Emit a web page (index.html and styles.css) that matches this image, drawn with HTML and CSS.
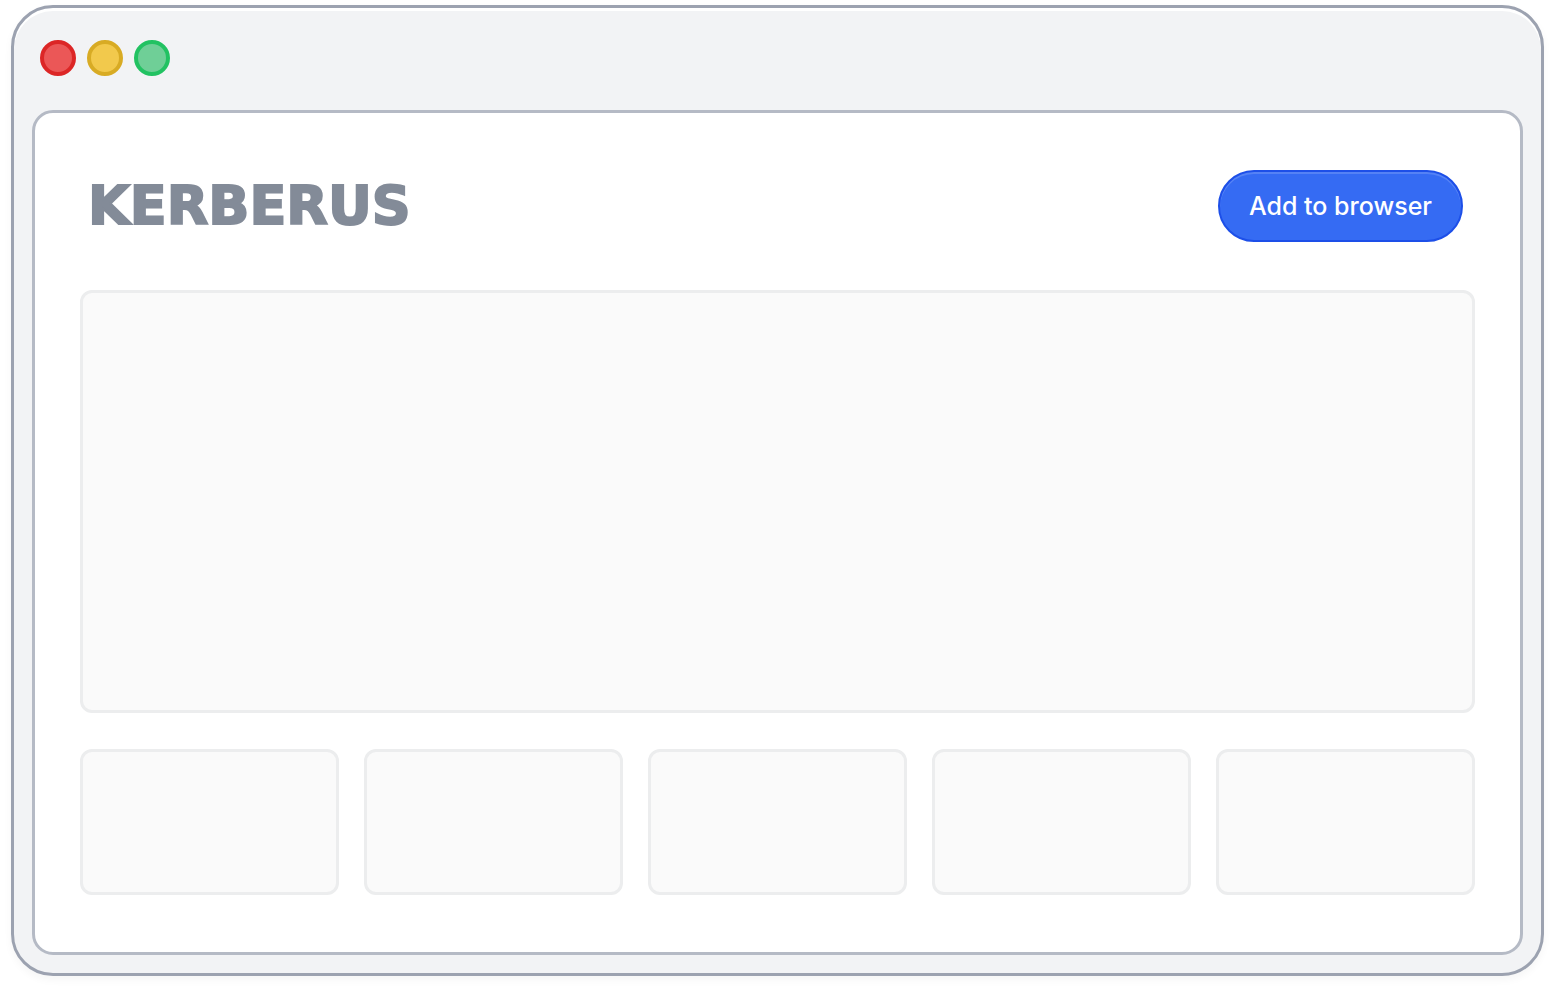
FILE: index.html
```
<!DOCTYPE html>
<html lang="en">
<head>
    <meta charset="UTF-8">
    <meta name="viewport" content="width=device-width, initial-scale=1.0">
    <title>Kerberus</title>
    <link rel="stylesheet" href="styles.css">
</head>
<body>
    <div class="browser">
        <div class="browser-bar">
            <span class="dot dot-red"></span>
            <span class="dot dot-yellow"></span>
            <span class="dot dot-green"></span>
        </div>
        <main class="page">
            <header class="page-header">
                <h1 class="logo">KERBERUS</h1>
                <button type="button" class="add-button">Add to browser</button>
            </header>
            <section class="placeholder hero"></section>
            <div class="tiles">
                <div class="placeholder"></div>
                <div class="placeholder"></div>
                <div class="placeholder"></div>
                <div class="placeholder"></div>
                <div class="placeholder"></div>
            </div>
        </main>
    </div>
</body>
</html>
```
FILE: styles.css
```
* {
    box-sizing: border-box;
}
body {
    display: flex;
    min-height: 100vh;
    margin: 0;
    padding: 5px 6px 12px 11px;
    background-color: #fff;
    font-family: Inter, sans-serif;
}
.browser {
    flex: 1;
    display: flex;
    flex-direction: column;
    padding: 0 18px 18px;
    border: 3px solid #9ca2b0;
    border-radius: 42px;
    background-color: #f2f3f5;
    box-shadow: inset 0 3px 0 #fff, 0 4px 8px rgba(0, 0, 0, 0.04);
}
.browser-bar {
    display: flex;
    gap: 11px;
    padding: 32px 8px 34px;
}
.dot {
    width: 36px;
    height: 36px;
    border: 4px solid;
    border-radius: 50%;
}
.dot-red {
    background-color: #eb5757;
    border-color: #dc2626;
}
.dot-yellow {
    background-color: #f2c94c;
    border-color: #d8ab24;
}
.dot-green {
    background-color: #6fcf97;
    border-color: #22c262;
}
.page {
    flex: 1;
    display: flex;
    flex-direction: column;
    padding: 57px 45px;
    border: 3px solid #b5bac5;
    border-radius: 21px;
    background-color: #fff;
}
.page-header {
    display: flex;
    justify-content: space-between;
    align-items: center;
    margin-bottom: 48px;
    padding: 0 12px 0 8px;
}
.logo {
    margin: 0;
    color: #838b98;
    font: bold 54px/72px "DejaVu Sans", sans-serif;
    -webkit-text-stroke: 2px #838b98;
}
.add-button {
    height: 72px;
    padding: 0 29px;
    border: 2px solid #1d4fe8;
    border-radius: 36px;
    background-color: #356bf3;
    box-shadow: inset 0 2px 0 #5582f5;
    color: #fff;
    font: 500 25px/32px Inter, sans-serif;
    cursor: pointer;
}
.placeholder {
    border: 3px solid #ecedee;
    border-radius: 12px;
    background-color: #fafafa;
}
.hero {
    flex: 1;
    min-height: 200px;
    margin-bottom: 36px;
}
.tiles {
    display: grid;
    grid-template-columns: repeat(5, 1fr);
    grid-auto-rows: 146px;
    gap: 25px;
}
```
